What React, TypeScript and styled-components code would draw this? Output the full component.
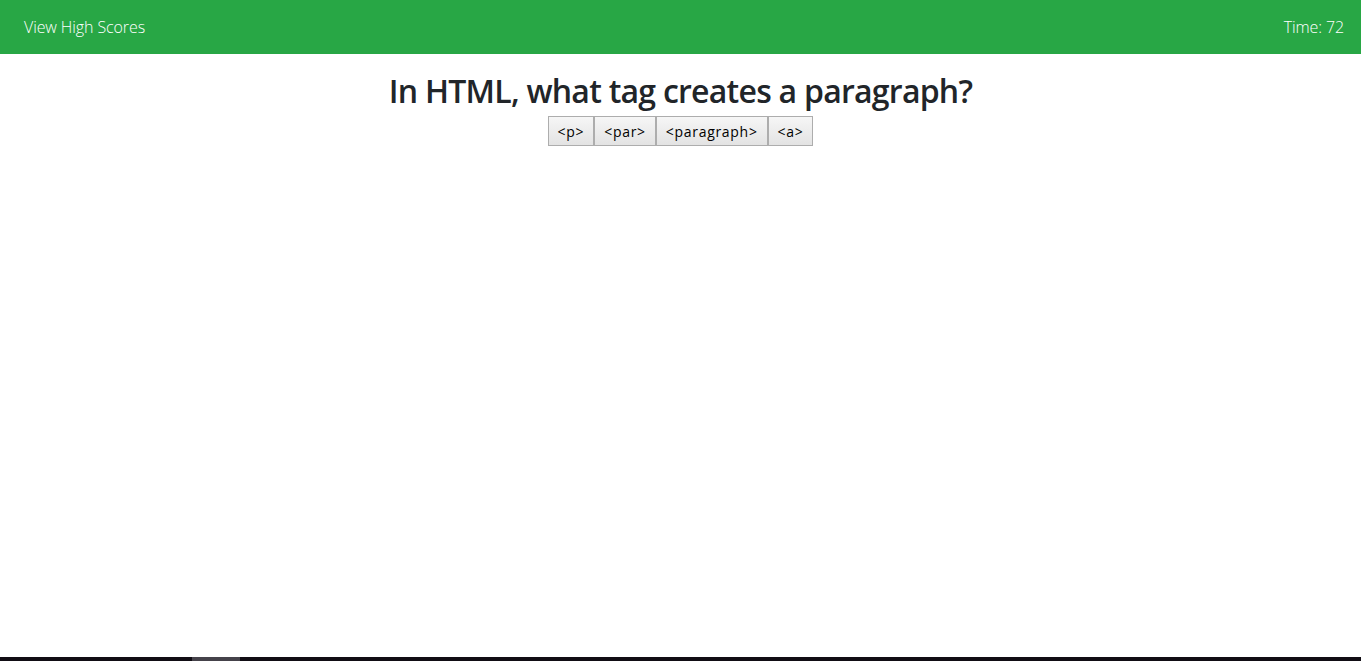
import React from "react";
import styled, { createGlobalStyle } from "styled-components";

const Global = createGlobalStyle`
  html, body { margin: 0; padding: 0; height: 100%; background: #fff; }
  body { font-family: "Open Sans", "Noto Sans", sans-serif; color: #212529; }
  #root { height: 100%; }
`;

const Page = styled.div`
  height: 661px;
  display: flex;
  flex-direction: column;
`;

const NavBar = styled.header`
  height: 54px;
  background: #28a745;
  display: flex;
  align-items: center;
  justify-content: space-between;
  padding: 0 17px 0 24px;
  color: #fff;
  font-size: 16px;
  font-weight: 300;
  flex-shrink: 0;
`;

const NavText = styled.span`
  letter-spacing: -0.1px;
`;

const Main = styled.main`
  flex: 1;
  display: flex;
  flex-direction: column;
  align-items: center;
  padding-top: 16px;
`;

const Question = styled.h2`
  margin: 0 0 4px;
  font-size: 32px;
  line-height: 42px;
  font-weight: 600;
  letter-spacing: -0.75px;
  color: #212529;
`;

const Choices = styled.div`
  display: flex;
`;

const Choice = styled.button`
  height: 30px;
  padding: 0 9px;
  margin: 0;
  font-family: "Open Sans", "Noto Sans", sans-serif;
  font-size: 14px;
  letter-spacing: 0.7px;
  color: #000;
  border: 1px solid #adadad;
  background: linear-gradient(#f6f6f6, #e3e3e3);
  cursor: pointer;
`;

const Footer = styled.div`
  height: 4px;
  background: #110d14;
  display: flex;
  flex-shrink: 0;
`;

const FooterThumb = styled.div`
  margin-left: 192px;
  width: 48px;
  background: #45424a;
`;

export default function App() {
  const answers = ["<p>", "<par>", "<paragraph>", "<a>"];
  return (
    <Page>
      <Global />
      <NavBar>
        <NavText>View High Scores</NavText>
        <NavText>Time: 72</NavText>
      </NavBar>
      <Main>
        <Question>In HTML, what tag creates a paragraph?</Question>
        <Choices>
          {answers.map((a) => (
            <Choice key={a}>{a}</Choice>
          ))}
        </Choices>
      </Main>
      <Footer>
        <FooterThumb />
      </Footer>
    </Page>
  );
}
